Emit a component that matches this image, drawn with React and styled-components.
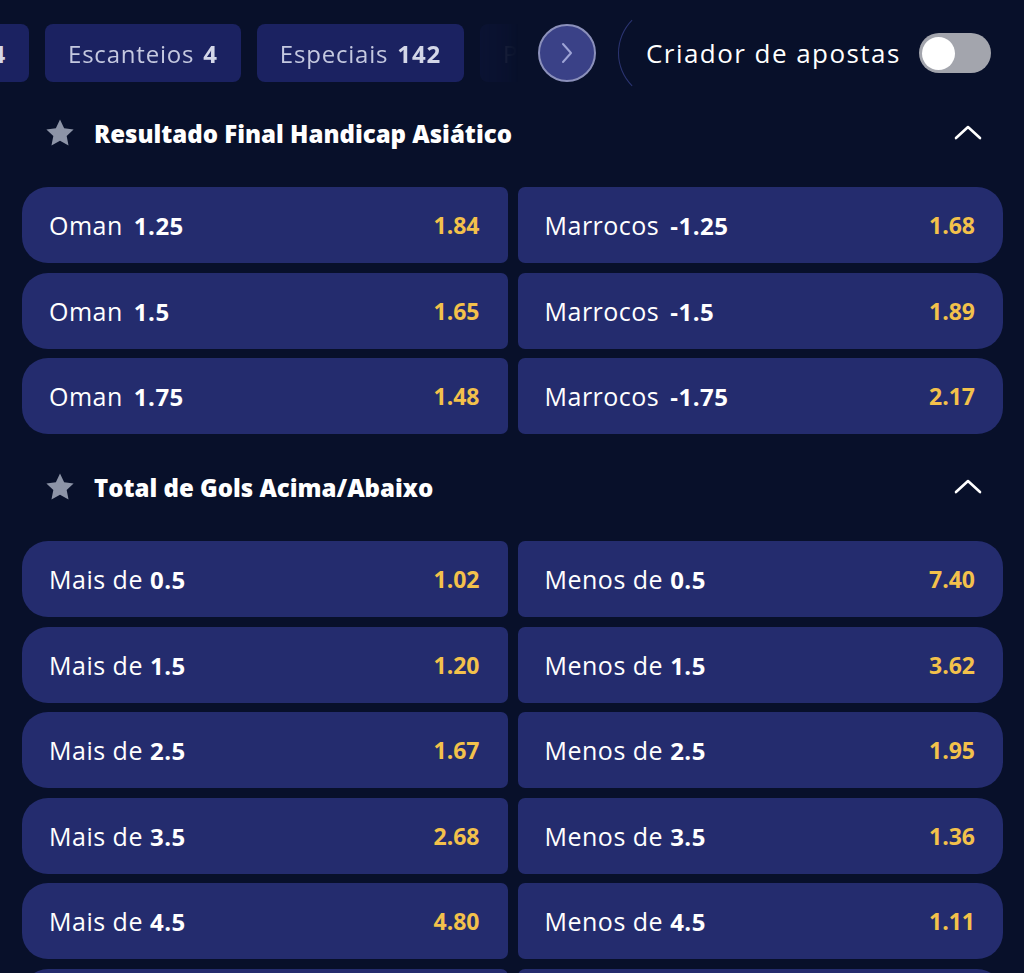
import React from "react";
import styled, { createGlobalStyle } from "styled-components";

const GlobalStyle = createGlobalStyle`
  html, body {
    margin: 0;
    padding: 0;
    background: #08102a;
    overflow: hidden;
  }
  * { box-sizing: border-box; }
`;

const tabs = [
  { label: "Escanteios", count: "4" },
  { label: "Especiais", count: "142" },
  { label: "Placar", count: "38" },
];

const markets = [
  {
    title: "Resultado Final Handicap Asiático",
    team: true,
    rows: [
      ["Oman", "1.25", "1.84", "Marrocos", "-1.25", "1.68"],
      ["Oman", "1.5", "1.65", "Marrocos", "-1.5", "1.89"],
      ["Oman", "1.75", "1.48", "Marrocos", "-1.75", "2.17"],
    ],
  },
  {
    title: "Total de Gols Acima/Abaixo",
    team: false,
    rows: [
      ["Mais de", "0.5", "1.02", "Menos de", "0.5", "7.40"],
      ["Mais de", "1.5", "1.20", "Menos de", "1.5", "3.62"],
      ["Mais de", "2.5", "1.67", "Menos de", "2.5", "1.95"],
      ["Mais de", "3.5", "2.68", "Menos de", "3.5", "1.36"],
      ["Mais de", "4.5", "4.80", "Menos de", "4.5", "1.11"],
      ["Mais de", "5.5", "11.00", "Menos de", "5.5", "1.03"],
    ],
  },
];

const StarIcon = () => (
  <svg width="32" height="32" viewBox="0 0 24 24">
    <path
      d="M12 1.8l3.1 6.6 7.1.9-5.2 4.9 1.4 7.1L12 17.8l-6.4 3.5 1.4-7.1-5.2-4.9 7.1-.9z"
      fill="#8d94a7"
    />
  </svg>
);

const ChevronUp = () => (
  <svg width="30" height="20" viewBox="0 0 30 20">
    <path d="M3 15 L15 4 L27 15" fill="none" stroke="#fff" strokeWidth="2.6" strokeLinecap="round" strokeLinejoin="round" />
  </svg>
);

const ChevronRight = () => (
  <svg width="20" height="24" viewBox="0 0 20 24">
    <path d="M6 3 L14 12 L6 21" fill="none" stroke="#9ea4d6" strokeWidth="2" strokeLinecap="round" strokeLinejoin="round" />
  </svg>
);

const App = () => (
  <>
    <GlobalStyle />
    <Page>
      <TopBar>
        <TabsArea>
          <TabStrip>
            <ClippedTab>
              <Tab>
                Cartões <b>4</b>
              </Tab>
            </ClippedTab>
            {tabs.map((t) => (
              <Tab key={t.label}>
                {t.label} <b>{t.count}</b>
              </Tab>
            ))}
          </TabStrip>
          <ArrowButton>
            <ChevronRight />
          </ArrowButton>
        </TabsArea>
        <BuilderPanel>
          <BuilderLabel>Criador de apostas</BuilderLabel>
          <Toggle>
            <Knob />
          </Toggle>
        </BuilderPanel>
      </TopBar>

      {markets.map((m) => (
        <Market key={m.title}>
          <MarketHeader>
            <StarIcon />
            <MarketTitle>{m.title}</MarketTitle>
            <ChevronUp />
          </MarketHeader>
          <OddsGrid>
            {m.rows.map((r, i) => (
              <React.Fragment key={i}>
                <OddCard side="left">
                  <Selection team={m.team}>
                    {r[0]}
                    <Line>{r[1]}</Line>
                  </Selection>
                  <Price>{r[2]}</Price>
                </OddCard>
                <OddCard side="right">
                  <Selection team={m.team}>
                    {r[3]}
                    <Line>{r[4]}</Line>
                  </Selection>
                  <Price>{r[5]}</Price>
                </OddCard>
              </React.Fragment>
            ))}
          </OddsGrid>
        </Market>
      ))}
    </Page>
  </>
);

const Page = styled.div`
  width: 1024px;
  height: 973px;
  overflow: hidden;
  background: #08102a;
  font-family: "Open Sans", Lato, sans-serif;
  color: #fff;
`;

const TopBar = styled.div`
  display: flex;
  align-items: center;
  height: 106px;
`;

const TabsArea = styled.div`
  position: relative;
  width: 600px;
  height: 106px;
  display: flex;
  align-items: center;
`;

const TabStrip = styled.div`
  display: flex;
  align-items: center;
  gap: 16px;
  width: 540px;
  overflow: hidden;
  -webkit-mask-image: linear-gradient(to right, #000 470px, rgba(0,0,0,0.16) 480px, rgba(0,0,0,0.08) 505px, transparent 518px);
  mask-image: linear-gradient(to right, #000 470px, rgba(0,0,0,0.16) 480px, rgba(0,0,0,0.08) 505px, transparent 518px);
`;

const ClippedTab = styled.div`
  flex: 0 0 29px;
  display: flex;
  justify-content: flex-end;
  overflow: hidden;
`;

const Tab = styled.div`
  flex: 0 0 auto;
  height: 58px;
  display: flex;
  align-items: center;
  gap: 9px;
  padding: 0 23px;
  border-radius: 8px;
  background: #1b2261;
  color: #c5c9e0;
  font-size: 24px;
  letter-spacing: 0.8px;
  white-space: nowrap;

  b {
    font-weight: 700;
    color: #d4d7e8;
  }
`;

const ArrowButton = styled.div`
  position: absolute;
  left: 538px;
  top: 24px;
  width: 58px;
  height: 58px;
  border-radius: 50%;
  background: #3a4187;
  border: 2px solid #8b90bb;
  display: flex;
  align-items: center;
  justify-content: center;
`;

const BuilderPanel = styled.div`
  flex: 1;
  height: 94px;
  display: flex;
  align-items: center;
  gap: 18px;
  margin-left: 18px;
  padding-left: 27px;
  border: 1.5px solid transparent;
  border-left-color: #2c3573;
  border-right: none;
  border-radius: 50px 0 0 50px;
`;

const BuilderLabel = styled.span`
  font-size: 26px;
  letter-spacing: 1.45px;
  color: #fff;
  white-space: nowrap;
`;

const Toggle = styled.div`
  width: 72px;
  height: 40px;
  border-radius: 20px;
  background: #a3a5ad;
  padding: 3px;
  display: flex;
  align-items: center;
`;

const Knob = styled.div`
  width: 33px;
  height: 33px;
  border-radius: 50%;
  background: #fff;
`;

const Market = styled.section`
  padding: 0 21px 0 22px;
`;

const MarketHeader = styled.div`
  height: 54px;
  padding: 0 20px 0 22px;
  display: flex;
  align-items: center;
  gap: 18px;

  svg:last-child {
    margin-left: auto;
  }
`;

const MarketTitle = styled.h2`
  margin: 0;
  font-size: 24px;
  font-weight: 800;
  color: #fff;
`;

const OddsGrid = styled.div`
  display: grid;
  grid-template-columns: 1fr 1fr;
  column-gap: 10px;
  row-gap: 9.5px;
  padding-top: 27px;
  padding-bottom: 26px;
`;

const OddCard = styled.div`
  height: 76px;
  display: flex;
  align-items: center;
  justify-content: space-between;
  padding: 0 28px 0 27px;
  background: #242c6e;
  border-radius: ${(p) => (p.side === "left" ? "26px 7px 7px 26px" : "7px 26px 26px 7px")};
`;

const Selection = styled.span`
  font-size: 25px;
  letter-spacing: 0.5px;
  color: #fff;
  display: flex;
  align-items: baseline;
  gap: ${(p) => (p.team ? "11px" : "7px")};
`;

const Line = styled.b`
  font-weight: 700;
  font-size: 24px;
`;

const Price = styled.span`
  font-size: 23px;
  font-weight: 700;
  color: #f3c14b;
`;

export default App;
